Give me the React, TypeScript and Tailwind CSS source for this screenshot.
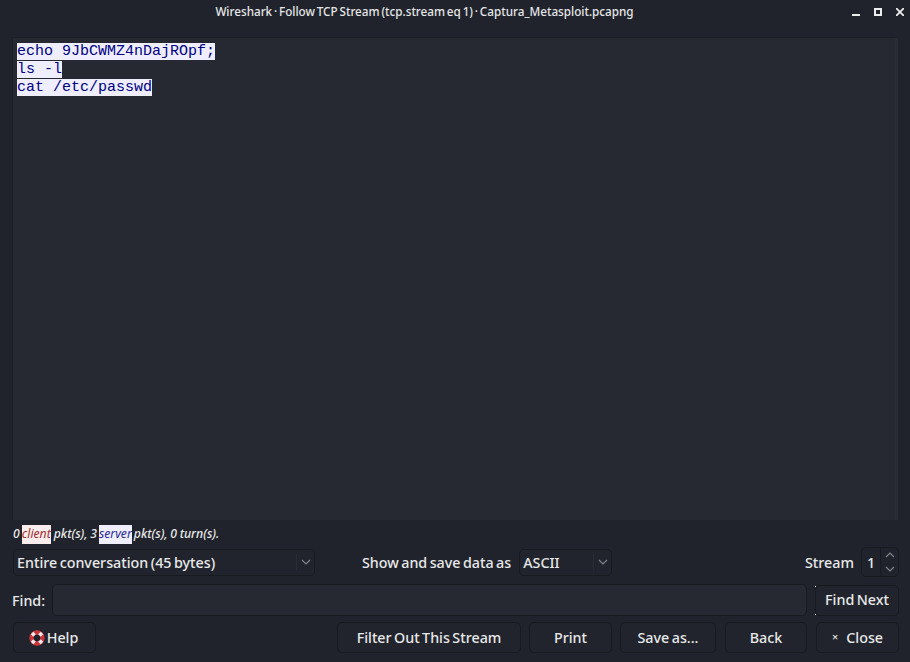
import React from "react";

const btn = "h-[31px] flex items-center justify-center rounded-[5px] border border-[#181a1f] bg-[#21242c] text-[#e8e9ea] text-[14.3px] font-medium [word-spacing:-1.3px] shrink-0";

function Chevron({ className = "" }: { className?: string }) {
  return (
    <svg width="10" height="6" viewBox="0 0 10 6" className={className} fill="none" stroke="#7f838a" strokeWidth="1.2">
      <path d="M1 1l4 4 4-4" />
    </svg>
  );
}

function Buoy() {
  return (
    <svg width="16" height="16" viewBox="0 0 16 16" className="shrink-0">
      <circle cx="8" cy="8" r="5.5" fill="none" stroke="#c9353c" strokeWidth="4.4" />
      <g stroke="#f5eaea" strokeWidth="3.6">
        <path d="M3 3l2.6 2.6" />
        <path d="M13 3l-2.6 2.6" />
        <path d="M3 13l2.6-2.6" />
        <path d="M13 13l-2.6-2.6" />
      </g>
      <circle cx="8" cy="8" r="3" fill="#20232b" />
    </svg>
  );
}

function Combo({ label, w }: { label: string; w: string }) {
  return (
    <div className={`${w} h-[27px] flex items-center rounded-[5px] border border-[#181a1f] bg-[#21242c] pl-[3px] text-[14.3px] font-medium [word-spacing:-1.3px] text-[#e8e9ea]`}>
      <span className="flex-1 pt-[1px]">{label}</span>
      <span className="w-[18px] h-[16px] flex items-center justify-center border-l border-[#2a2d35]">
        <Chevron />
      </span>
    </div>
  );
}

export default function App() {
  return (
    <div
      className="w-[910px] h-[662px] overflow-hidden flex flex-col bg-[#20232b] text-[#e8e9ea]"
      style={{ fontFamily: '"Noto Sans", sans-serif' }}
    >
      <header className="h-[26px] flex items-center relative shrink-0">
        <div className="flex-1 text-center text-[11.7px] [word-spacing:-1.2px] font-medium text-[#e6e7e8] pr-[61px] leading-none mb-[3px]">
          Wireshark · Follow TCP Stream (tcp.stream eq 1) · Captura_Metasploit.pcapng
        </div>
        <div className="absolute right-[6px] top-[8px] flex items-center gap-[14px]">
          <div className="w-[8px] h-[8px] flex items-end"><div className="w-[8px] h-[2px] bg-[#eceded]" /></div>
          <div className="w-[8px] h-[8px] border-2 border-[#eceded]" />
          <svg width="8" height="8" viewBox="0 0 8 8" stroke="#eceded" strokeWidth="1.8"><path d="M0 0l8 8M8 0L0 8" /></svg>
        </div>
      </header>

      <main className="mt-[11px] mx-[12px] h-[483px] shrink-0 bg-[#272932] border-l border-t border-[#1c1e24] pl-[4px] pt-[5px] relative">
        <pre className="text-[15px] leading-[18px] text-[#000080]" style={{ fontFamily: '"Liberation Mono", monospace' }}>
          <span className="block"><span className="bg-[#eeeeff]">echo 9JbCWMZ4nDajROpf;</span></span>
          <span className="block"><span className="bg-[#eeeeff]">ls -l</span></span>
          <span className="block"><span className="bg-[#eeeeff]">cat /etc/passwd</span></span>
        </pre>
        <div className="absolute right-0 top-0 bottom-0 w-[3px] bg-[#2a2c35]" />
      </main>

      <div className="h-[28px] shrink-0 flex items-center px-[13px] text-[12.2px] italic font-medium text-[#e8e9ea] pt-[1px] [word-spacing:-0.5px]">
        <span>0</span>
        <span className="ml-[2px] bg-[#fbeded] text-[#a03030] font-normal">client</span>
        <span className="ml-[3px]">pkt(s), 3</span>
        <span className="ml-[2px] bg-[#eeeeff] text-[#2a2a90] font-normal">server</span>
        <span className="ml-[2px]">pkt(s), 0 turn(s).</span>
      </div>

      <div className="flex items-center pl-[13px] pr-[11px] h-[28px] shrink-0">
        <Combo label="Entire conversation (45 bytes)" w="w-[302px]" />
        <span className="ml-[47px] pt-[1px] text-[14.3px] font-medium [word-spacing:-1.3px]">Show and save data as</span>
        <div className="ml-[8px]"><Combo label="ASCII" w="w-[93px]" /></div>
        <span className="ml-auto pt-[1px] text-[14.3px] font-medium">Stream</span>
        <div className="ml-[7px] h-[30px] w-[38px] flex rounded-[5px] border border-[#181a1f]">
          <span className="w-[19px] flex items-center justify-center pt-[1px] text-[14.3px] font-medium border-r border-[#181a1f]">1</span>
          <span className="flex-1 flex flex-col items-center justify-center gap-[8px]">
            <Chevron className="rotate-180" />
            <Chevron />
          </span>
        </div>
      </div>

      <div className="flex items-center pl-[12px] pr-[11px] mt-[8px] h-[32px] shrink-0">
        <span className="text-[14.3px] font-medium w-[40px] pt-[1px]">Find:</span>
        <div className="flex-1 h-[32px] rounded-[5px] border border-[#181a1f] bg-[#262932]" />
        <button className={`${btn} ml-[8px] w-[84px] relative`}>
          Find Next
          <span className="absolute left-[-1px] top-0 w-px h-px bg-white" />
          <span className="absolute left-[-1px] bottom-0 w-px h-px bg-white" />
        </button>
      </div>

      <div className="flex items-center pl-[13px] pr-[11px] mt-[6px] shrink-0">
        <button className={`${btn} w-[83px] gap-[2px] pr-[2px]`}><Buoy />Help</button>
        <button className={`${btn} ml-auto w-[184px]`}>Filter Out This Stream</button>
        <button className={`${btn} ml-[8px] w-[83px]`}>Print</button>
        <button className={`${btn} ml-[8px] w-[96px]`}>Save as...</button>
        <button className={`${btn} ml-[9px] w-[82px]`}>Back</button>
        <button className={`${btn} ml-[9px] w-[83px] gap-[8px]`}><span className="text-[11px]">×</span>Close</button>
      </div>
    </div>
  );
}
